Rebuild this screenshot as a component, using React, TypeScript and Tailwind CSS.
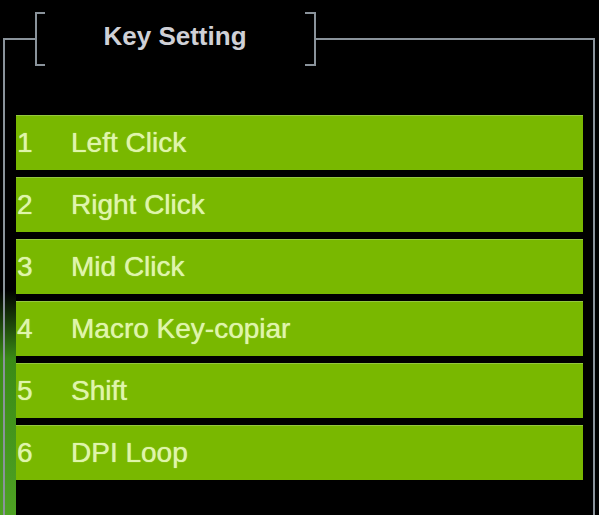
import React from 'react';

const keys = [
  { id: 1, label: 'Left Click' },
  { id: 2, label: 'Right Click' },
  { id: 3, label: 'Mid Click' },
  { id: 4, label: 'Macro Key-copiar' },
  { id: 5, label: 'Shift' },
  { id: 6, label: 'DPI Loop' },
];

function KeyRow({ id, label }: { id: number; label: string }) {
  return (
    <div className="flex h-[55px] items-center border-t border-[#94c83e] bg-[#79b800] text-[28px] leading-none text-[#dff5ab] [text-shadow:0_0_1px_#dff5ab]">
      <span className="w-[55px] pl-[1px]">{id}</span>
      <span>{label}</span>
    </div>
  );
}

export default function App() {
  return (
    <div className="h-[515px] w-[599px] overflow-hidden bg-black bg-[linear-gradient(180deg,#000000,#3a8a16_30%,#4fa324)] bg-[length:16px_230px] bg-[position:0px_290px] bg-no-repeat pt-[12px] font-['Liberation_Sans',Arial,sans-serif]">
      <fieldset className="ml-[3px] mr-[4px] border-2 border-b-0 border-[#8a939b] pl-[11px] pr-[10px] pt-[49px] pb-[60px]">
        {/* Title with bracket ends */}
        <legend className="ml-[19px] flex h-[54px] w-[281px] items-stretch">
          <span className="w-[10px] border-y-2 border-l-2 border-[#8a939b]" />
          <span className="flex flex-1 items-center justify-center pb-[5px] text-[26px] font-bold text-[#cfd0d6]">
            Key Setting
          </span>
          <span className="w-[11px] border-y-2 border-r-2 border-[#8a939b]" />
        </legend>

        <div className="flex flex-col gap-[7px]">
          {keys.map(k => (
            <KeyRow key={k.id} id={k.id} label={k.label} />
          ))}
        </div>
      </fieldset>
    </div>
  );
}
